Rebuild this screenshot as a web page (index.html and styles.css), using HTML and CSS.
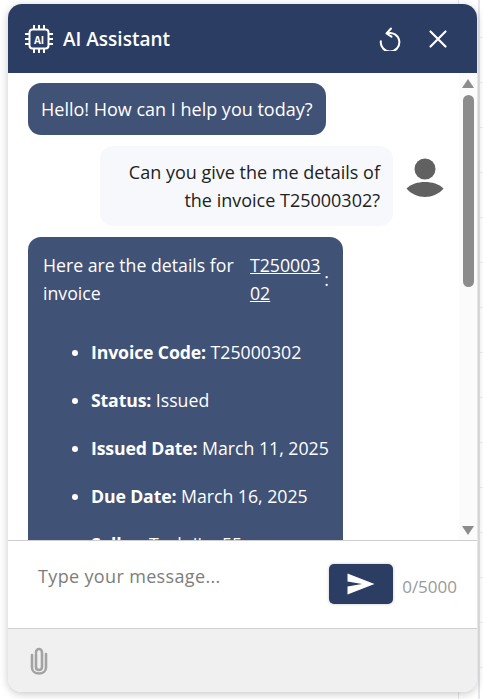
FILE: index.html
```html
<!DOCTYPE html>
<html lang="en">
  <head>
    <meta charset="UTF-8" />
    <title>AI Assistant</title>
    <link rel="stylesheet" href="styles.css">
  </head>
  <body>
    <div class="chat-window">
      <div class="chat-header">
        <svg class="chip-icon" viewBox="0 0 32 32" width="32" height="32" fill="none" stroke="#fff" stroke-width="2">
          <rect x="6.500" y="6.500" width="19" height="19" rx="3" />
          <path d="M11 2v4M16 2v4M21 2v4M11 26v4M16 26v4M21 26v4M2 11h4M2 16h4M2 21h4M26 11h4M26 16h4M26 21h4" />
          <text x="16" y="20.500" text-anchor="middle" class="chip-text">AI</text>
        </svg>
        <span class="chat-title">AI Assistant</span>
        <button class="header-button">
          <svg viewBox="0 0 24 24" width="24" height="24" fill="none" stroke="#fff" stroke-width="2" stroke-linecap="round" stroke-linejoin="round">
            <path d="M9.500 6.300a9.300 9.300 0 1 1-6.700 7.900" />
            <path d="M13 1.500L8.500 6.500l5 3.200" />
          </svg>
        </button>
        <button class="header-button">
          <svg viewBox="0 0 24 24" width="24" height="24" fill="none" stroke="#fff" stroke-width="2.200" stroke-linecap="round">
            <path d="M4.500 4.500l15 15M19.500 4.500l-15 15" />
          </svg>
        </button>
      </div>

      <div class="chat-body">
        <div class="messages">
          <div class="bubble bot-bubble">Hello! How can I help you today?</div>
          <div class="user-row">
            <div class="bubble user-bubble">Can you give the me details of the invoice T25000302?</div>
            <svg class="user-icon" viewBox="0 0 38 40" width="38" height="40" fill="#616161">
              <circle cx="19" cy="11" r="10.500" />
              <path d="M0.500 30.500C5 26 12 24 19 24s14 2 18.500 6.500C33 36 26 39 19 39S5 36 0.500 30.500z" />
            </svg>
          </div>
          <div class="bubble bot-bubble details">
            <div class="details-head">
              <span class="details-intro">Here are the details for invoice</span>
              <a class="details-link" href="#">T25000302</a>
              <span class="details-colon">:</span>
            </div>
            <ul class="details-list">
              <li><b>Invoice Code:</b> T25000302</li>
              <li><b>Status:</b> Issued</li>
              <li><b>Issued Date:</b> March 11, 2025</li>
              <li><b>Due Date:</b> March 16, 2025</li>
              <li><b>Seller:</b> Tech Jin, 55</li>
            </ul>
          </div>
        </div>
        <div class="scrollbar">
          <div class="arrow-up"></div>
          <div class="scroll-track"><div class="scroll-thumb"></div></div>
          <div class="arrow-down"></div>
        </div>
      </div>

      <div class="chat-input">
        <div class="placeholder">Type your message...</div>
        <button class="send-button">
          <svg viewBox="0 0 28 22" width="28" height="22" fill="#fff">
            <path d="M0.500 0.500L27.500 11 0.500 21.500V13.500L15 11 0.500 8.500z" />
          </svg>
        </button>
        <span class="char-count">0/5000</span>
      </div>

      <div class="chat-footer">
        <svg viewBox="0 0 20 28" width="20" height="28" fill="none" stroke="#a3a3a3" stroke-width="2.600" stroke-linecap="round">
          <path d="M7 7v13c0 2 1.300 3 3 3s3-1 3-3V5.500C13 3 11.500 2 10 2S7 3 7 5.500" />
          <path d="M3 8v12.500C3 24 6 26.500 10 26.500s7-2.500 7-6V7" />
        </svg>
      </div>
    </div>
  </body>
</html>
```

FILE: styles.css
```css
html,
body {
  height: 100%;
}
body {
  margin: 0;
  background-color: #fff;
  /* faint table lines of the page behind the chat */
  background-image:
    linear-gradient(#e6e6ea, #e6e6ea),
    linear-gradient(#e6e6ea, #e6e6ea),
    repeating-linear-gradient(to bottom, transparent 0, transparent 37px, #ececec 37px, #ececec 38px, transparent 38px, transparent 45px);
  background-size: 2px 100%, 1px 100%, 5px 100%;
  background-position: 478px 0, 458px 0, 478px 0;
  background-repeat: no-repeat;
  font-family: "Open Sans", "Noto Sans", sans-serif;
  overflow: hidden;
}
.chat-window {
  width: 469px;
  height: 688px;
  margin: 4px 0 0 8px;
  display: flex;
  flex-direction: column;
  border-radius: 14px;
  overflow: hidden;
  background-color: #fff;
  box-shadow: 0 2px 8px rgba(0, 0, 0, 0.22);
}
.chat-header {
  height: 69px;
  flex: none;
  display: flex;
  align-items: center;
  padding: 0 27px 0 15px;
  background-color: #2b3d63;
  color: #fff;
}
.chip-icon {
  flex: none;
}
.chip-text {
  font-size: 10px;
  font-weight: 700;
  fill: #fff;
  stroke: none;
}
.chat-title {
  flex: 1;
  margin-left: 8px;
  font-size: 19px;
  font-weight: 600;
}
.header-button {
  padding: 0;
  margin-left: 24px;
  border: none;
  background: none;
  display: flex;
}
.chat-body {
  height: 467px;
  flex: none;
  display: flex;
  overflow: hidden;
}
.messages {
  flex: 1;
  min-width: 0;
  padding: 10px 15px 0 20px;
  display: flex;
  flex-direction: column;
  align-items: flex-start;
  overflow: hidden;
}
.bubble {
  padding: 12px 14px 12px 13px;
  border-radius: 13px;
  font-size: 18px;
  line-height: 28px;
  box-sizing: border-box;
}
.bot-bubble {
  background-color: #415277;
  color: #fff;
}
.user-row {
  width: 100%;
  margin-top: 11px;
  display: flex;
  justify-content: flex-end;
  align-items: flex-start;
}
.user-bubble {
  width: 293px;
  padding-right: 13px;
  background-color: #f7f8fb;
  color: #222;
  text-align: right;
}
.user-icon {
  flex: none;
  margin: 12px 0 0 13px;
}
.details {
  width: 315px;
  margin-top: 11px;
  padding: 14px 14px 0 15px;
  flex: none;
  font-size: 17.700px;
}
.details-head {
  display: flex;
  align-items: center;
}
.details-intro {
  width: 207px;
  flex: none;
}
.details-link {
  color: #fff;
  width: 74px;
  word-break: break-all;
}
.details-colon {
  margin-left: 1px;
}
.details-list {
  margin: 31px 0 0;
  padding-left: 48px;
}
.details-list li {
  margin-bottom: 20px;
  white-space: nowrap;
}
.details-list b {
  letter-spacing: -0.15px;
}
.scrollbar {
  width: 18px;
  flex: none;
  display: flex;
  flex-direction: column;
  align-items: center;
  background-color: #fbfbfb;
}
.arrow-up {
  margin-top: 6px;
  border: 6px solid transparent;
  border-top: none;
  border-bottom: 9px solid #8c8c8c;
}
.arrow-down {
  margin-bottom: 5px;
  border: 6px solid transparent;
  border-bottom: none;
  border-top: 9px solid #8c8c8c;
}
.scroll-track {
  flex: 1;
  width: 100%;
  display: flex;
  justify-content: center;
  padding-top: 7px;
}
.scroll-thumb {
  width: 11px;
  height: 192px;
  border-radius: 6px;
  background-color: #8c8c8c;
}
.chat-input {
  height: 89px;
  flex: none;
  box-sizing: border-box;
  display: flex;
  align-items: flex-start;
  padding: 0 20px 0 30px;
  border-top: 1px solid #cfcfcf;
  border-bottom: 1px solid #cfcfcf;
}
.placeholder {
  flex: 1;
  margin-top: 21px;
  font-size: 18px;
  line-height: 28px;
  letter-spacing: 0.35px;
  color: #7d7d7d;
}
.send-button {
  width: 64px;
  height: 40px;
  margin-top: 23px;
  padding: 0;
  border: none;
  border-radius: 5px;
  background-color: #2b3d63;
  display: flex;
  align-items: center;
  justify-content: center;
  box-shadow: 0 0 3px rgba(0, 0, 0, 0.25);
}
.char-count {
  margin: 35px 0 0 9px;
  font-size: 17px;
  line-height: 22px;
  color: #9a9a9a;
}
.chat-footer {
  flex: 1;
  display: flex;
  align-items: center;
  padding-left: 21px;
  background-color: #f0f0f0;
}
```
